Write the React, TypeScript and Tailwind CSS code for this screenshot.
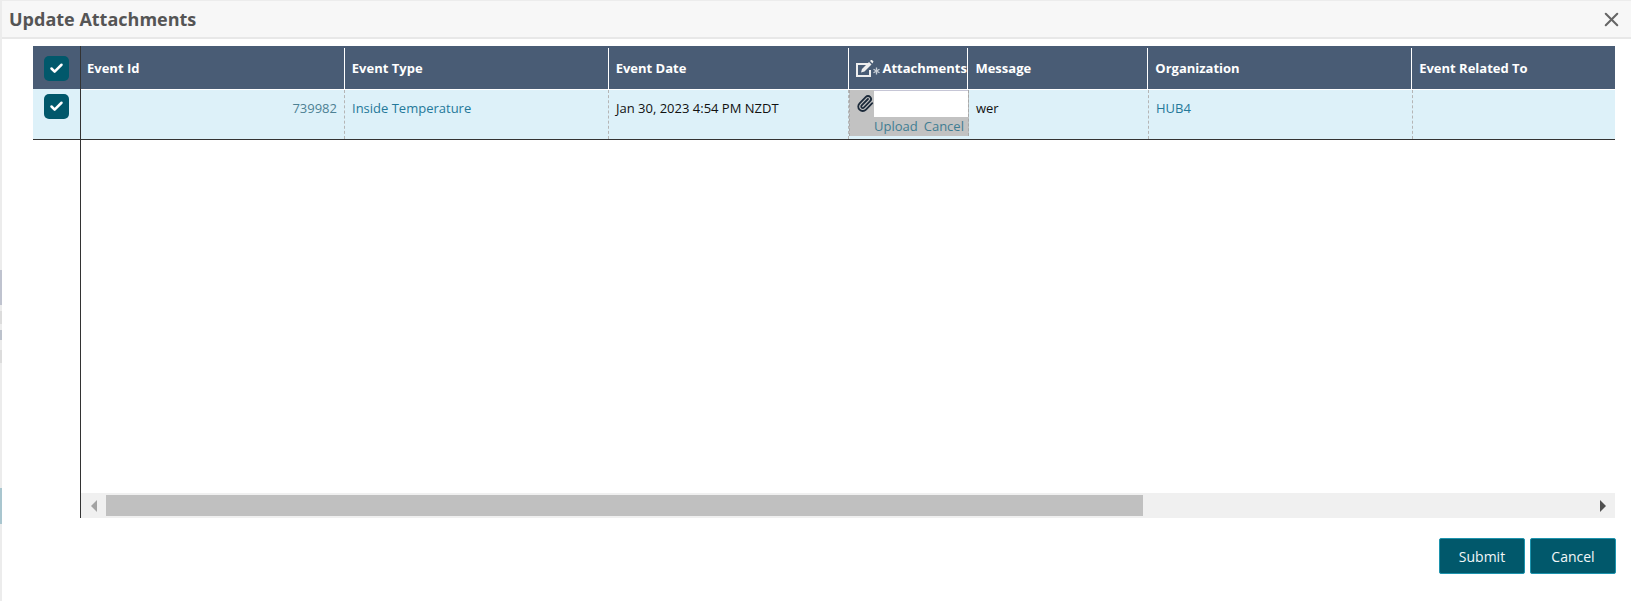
import React from 'react';
import { Check, Paperclip, X } from 'lucide-react';

const COLUMNS = [
  { label: 'Event Id', width: 'w-[264px]' },
  { label: 'Event Type', width: 'w-[264px]' },
  { label: 'Event Date', width: 'w-[240px]' },
  { label: 'Attachments', width: 'w-[120px]' },
  { label: 'Message', width: 'w-[180px]' },
  { label: 'Organization', width: 'w-[264px]' },
  { label: 'Event Related To', width: 'w-[203px]' },
];

const CheckBox = () => (
  <div className="flex h-[25px] w-[25px] items-center justify-center rounded-[5px] bg-[#01586b]">
    <Check size={15} strokeWidth={4} className="text-white" />
  </div>
);

const PencilIcon = () => (
  <svg width="26" height="18" viewBox="0 0 26 18" className="mr-[2px] -ml-[1px] shrink-0">
    <path d="M13 4H2v12h13v-6" fill="none" stroke="#eeeeee" strokeWidth="2" />
    <path d="M6 12.500l1-3.500 7-7 2.500 2.500-7 7z" fill="#eeeeee" />
    <path d="M15 1l1.500-1.500 2 2-1 2z" fill="#eeeeee" />
    <path d="M21.500 7.500v7M18.500 9.200l6 3.600M24.500 9.200l-6 3.600" stroke="#c9d0d8" strokeWidth="1.300" />
  </svg>
);

const App: React.FC = () => {
  return (
    <div className="flex h-[601px] w-[1631px] overflow-hidden bg-white font-['Open_Sans',sans-serif] text-[13px]">
      {/* backdrop peeking out on the left of the modal */}
      <div className="flex w-[2px] shrink-0 flex-col bg-[#ececec]">
        <div className="h-[270px] shrink-0" />
        <div className="h-[35px] shrink-0 bg-[#bfc3cf]" />
        <div className="h-[6px] shrink-0" />
        <div className="h-[13px] shrink-0 bg-[#dcdcdc]" />
        <div className="h-[6px] shrink-0" />
        <div className="h-[10px] shrink-0 bg-[#bcc2cc]" />
        <div className="h-[10px] shrink-0" />
        <div className="h-[13px] shrink-0 bg-[#dcdcdc]" />
        <div className="h-[125px] shrink-0" />
        <div className="h-[36px] shrink-0 bg-[#a9c6cf]" />
      </div>

      <div className="flex min-w-0 flex-1 flex-col">
        <div className="h-[1px] shrink-0 bg-[#ececec]" />
        <header className="flex h-[38px] shrink-0 items-center justify-between border-b-2 border-[#e8e8e8] bg-[#f7f7f7] pl-[7px] pr-[8px]">
          <h1 className="text-[18px] font-bold text-[#555555]">Update Attachments</h1>
          <X size={23} strokeWidth={2.200} className="text-[#666666]" />
        </header>

        <div className="ml-[31px] mt-[7px] flex h-[472px] w-[1582px] shrink-0">
          {/* frozen checkbox column */}
          <div className="flex w-[48px] shrink-0 flex-col border-r border-[#333333]">
            <div className="flex h-[43px] items-start justify-center bg-[#495c75] pt-[10px]">
              <CheckBox />
            </div>
            <div className="flex h-[51px] justify-center border-b border-[#333333] bg-[#ddf1f9] pt-[5px]">
              <CheckBox />
            </div>
          </div>

          <div className="flex min-w-0 flex-1 flex-col">
            <div className="flex h-[43px] shrink-0 bg-[#495c75] pt-[2px] font-bold text-white">
              {COLUMNS.map((col, i) => (
                <div
                  key={col.label}
                  className={`flex items-center whitespace-nowrap ${col.width} ${i < COLUMNS.length - 1 ? 'border-r border-white' : ''} ${i === 0 ? 'pl-[6px]' : 'pl-[7px]'}`}
                >
                  {i === 3 && <PencilIcon />}
                  {col.label}
                </div>
              ))}
            </div>

            <div className="flex h-[51px] shrink-0 border-t border-white border-b-[#333333] bg-[#ddf1f9] [border-bottom-width:1px]">
              <div className="w-[264px] border-r border-dashed border-[#b5b5b5] pr-[7px] pt-[9px] text-right text-[#4d8194]">739982</div>
              <div className="w-[264px] border-r border-dashed border-[#b5b5b5] pl-[7px] pt-[9px] text-[#24799a]">Inside Temperature</div>
              <div className="w-[240px] border-r border-dashed border-[#b5b5b5] pl-[7px] pt-[9px] text-[#111111]">Jan 30, 2023 4:54 PM NZDT</div>
              <div className="flex h-[46px] w-[120px] flex-col border-x border-dashed border-[#a8a8a8] bg-[#c2c2c2]">
                <div className="flex h-[27px] items-center pl-[6px]">
                  <Paperclip size={19} strokeWidth={2.400} className="w-[18px] shrink-0 text-[#1c2a3a]" />
                  <div className="h-[27px] flex-1 border-t border-[#c6c6d6] bg-white" />
                </div>
                <div className="flex gap-[6px] pl-[24px] leading-[19px] text-[#3f7d92]">
                  <span>Upload</span>
                  <span>Cancel</span>
                </div>
              </div>
              <div className="w-[180px] border-r border-dashed border-[#b5b5b5] pl-[7px] pt-[9px] text-[#111111]">wer</div>
              <div className="w-[264px] border-r border-dashed border-[#b5b5b5] pl-[7px] pt-[9px] text-[#24799a]">HUB4</div>
              <div className="flex-1" />
            </div>

            <div className="flex-1" />

            {/* horizontal scrollbar */}
            <div className="flex h-[25px] shrink-0 items-center bg-[#f0f0f0]">
              <div className="flex w-[25px] shrink-0 justify-center">
                <div className="h-0 w-0 border-y-[6px] border-r-[6px] border-y-transparent border-r-[#a3a3a3]" />
              </div>
              <div className="h-[21px] w-[1037px] shrink-0 bg-[#c0c0c0]" />
              <div className="flex flex-1 justify-end pr-[9px]">
                <div className="h-0 w-0 border-y-[6px] border-l-[6px] border-y-transparent border-l-[#505050]" />
              </div>
            </div>
          </div>
        </div>

        <footer className="mr-[15px] mt-[20px] flex justify-end gap-[5px]">
          <button className="h-[36px] w-[86px] rounded-[2px] border border-[#1c93ad] bg-[#01586b] text-[14px] text-[#f2f7f8]">Submit</button>
          <button className="h-[36px] w-[86px] rounded-[2px] border border-[#1c93ad] bg-[#01586b] text-[14px] text-[#f2f7f8]">Cancel</button>
        </footer>
      </div>
    </div>
  );
};

export default App;
